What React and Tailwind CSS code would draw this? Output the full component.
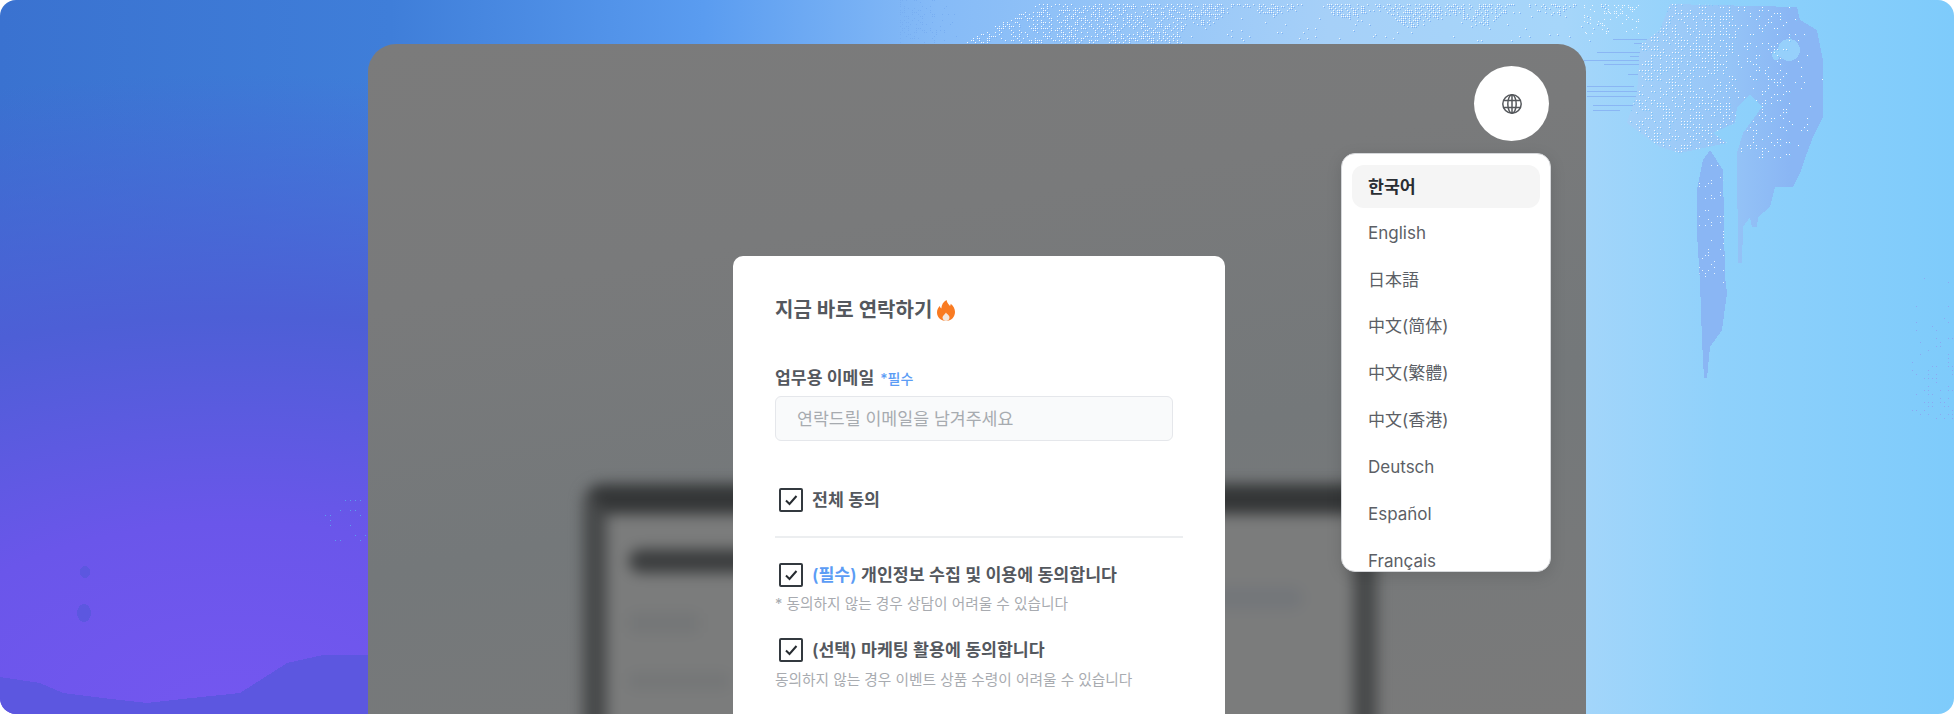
const languages = [
  "한국어",
  "English",
  "日本語",
  "中文(简体)",
  "中文(繁體)",
  "中文(香港)",
  "Deutsch",
  "Español",
  "Français",
];

const cjk = "font-['Inter','Noto_Sans_CJK_KR',sans-serif]";

// seeded so the speckle comes out the same on every render
function speckle(seed, x0, y0, x1, y1, step, density) {
  let s = seed;
  const next = () => {
    s = (s * 16807) % 2147483647;
    return s / 2147483647;
  };
  let d = "";
  for (let y = y0; y < y1; y += step) {
    for (let x = x0; x < x1; x += step) {
      if (next() < density(x, y)) d += `M${x} ${y}h1v1h-1z`;
    }
  }
  return d;
}

const blob =
  "M1670 4L1797 7L1800 20L1817 30L1823 60L1823 117L1813 137L1807 153L1800 173L1793 187L1775 187L1770 207L1758 217L1757 227L1752 227L1750 217L1743 227L1742 263L1738 263L1737 153L1743 133L1762 107L1750 95L1737 107L1735 123L1713 133L1727 143L1680 153L1660 147L1650 140L1627 123L1637 93L1640 45L1660 30Z";
const drip =
  "M1710 150L1723 170L1725 277L1727 293L1722 330L1715 340L1710 347L1707 378L1704 378L1702 340L1700 283L1697 233L1697 190L1703 160Z";
const waveLeft =
  "M0 677L40 683L63 693L103 698L147 703L173 700L240 693L287 663L323 655L368 655L368 714L0 714Z";

const topDots = speckle(7, 945, 4, 1185, 44, 2, (x, y) =>
  y > 50 - (x - 945) * 0.5 && y < 44 ? 0.36 : 0,
);
const topFade = speckle(9, 900, 0, 960, 44, 2, (x) => (960 - x) * 0.006);
const topDrips = speckle(11, 1185, 4, 1610, 42, 2, (x, y) => {
  const band = Math.sin(x * 0.09) + Math.sin(x * 0.023);
  return y < 15 + band * 7 ? 0.4 : 0.025;
});
const farLeft = speckle(17, 1584, 5, 1640, 34, 2, () => 0.14);
const mainDots = speckle(23, 1630, 4, 1830, 160, 3, (x) =>
  x < 1735 ? 0.42 : x < 1790 ? 0.22 : 0.05,
);
const dripDots = speckle(31, 1696, 150, 1728, 285, 3, () => 0.14);
const leftDots = speckle(43, 315, 500, 368, 550, 5, (x, y) =>
  x + (y - 500) * -0.4 > 318 ? 0.22 : 0,
);
const cornerDots = speckle(
  53,
  1900,
  270,
  1954,
  420,
  4,
  (x, y) => ((x - 1900) / 54) * ((y - 270) / 150) * 0.7,
);

const leftLines = [
  [1597, 1657, 52],
  [1630, 1657, 56],
  [1584, 1657, 60],
  [1604, 1657, 64],
  [1613, 1657, 39],
  [1634, 1657, 43],
  [1587, 1634, 86],
  [1587, 1637, 91],
  [1587, 1637, 96],
  [1593, 1637, 105],
  [1593, 1620, 110],
  [1628, 1650, 74],
];

function Backdrop() {
  return (
    <svg
      className="absolute inset-0"
      width="1954"
      height="714"
      viewBox="0 0 1954 714"
      shapeRendering="crispEdges"
    >
      <defs>
        <linearGradient id="blobFill" x1="1630" x2="1790" y1="0" y2="0" gradientUnits="userSpaceOnUse">
          <stop offset="0" stopColor="#a3d0f9" />
          <stop offset="0.6" stopColor="#96c5f7" />
          <stop offset="1" stopColor="#8ab6f4" />
        </linearGradient>
        <clipPath id="blobClip">
          <path d={blob} />
        </clipPath>
        <clipPath id="dripClip">
          <path d={drip} />
        </clipPath>
      </defs>
      <path d={waveLeft} fill="#5c57e0" />
      <ellipse cx="84" cy="613" rx="7" ry="9" fill="#5c57e0" />
      <ellipse cx="85" cy="572" rx="5" ry="6" fill="#5c57e0" />
      <path d={topFade} fill="#78aef2" />
      <path d={topDots} fill="#7fb2f3" transform="translate(1 1)" />
      <path d={topDots} fill="#f2f9ff" />
      <path d={topDrips} fill="#7fb2f3" transform="translate(1 1)" />
      <path d={topDrips} fill="#eef7ff" />
      <path d={farLeft} fill="#eef7ff" />
      <path d={leftDots} fill="#5a9ff0" />
      <path d={cornerDots} fill="#8aa8f2" />
      {leftLines.map(([a, b, y]) => (
        <rect key={`${a}-${y}`} x={a} y={y} width={b - a} height="1" fill="#8ab6f4" />
      ))}
      <path d={blob} fill="url(#blobFill)" />
      <path d={drip} fill="#8ab6f4" />
      <ellipse cx="1789" cy="50" rx="11" ry="11" fill="#96d0fb" />
      <ellipse cx="1776" cy="55" rx="4" ry="5" fill="#96d0fb" />
      <g clipPath="url(#blobClip)">
        <path d={mainDots} fill="#f4faff" />
        <path d={mainDots} fill="#7fc4f8" transform="translate(1 1)" />
      </g>
      <g clipPath="url(#dripClip)">
        <path d={dripDots} fill="#e6f4ff" />
      </g>
    </svg>
  );
}

function GlobeIcon() {
  return (
    <svg width="22" height="22" viewBox="0 0 22 22" fill="none" stroke="#55585c" strokeWidth="1.5">
      <circle cx="11" cy="11" r="9.2" />
      <ellipse cx="11" cy="11" rx="4.2" ry="9.2" />
      <path d="M2.6 7.6h16.8M2.6 14.4h16.8M11 2v18" />
    </svg>
  );
}

function FireIcon() {
  return (
    <svg width="18" height="21" viewBox="0 0 18 21">
      <path
        d="M9.5 0c.6 3 2.2 4.300 3.500 6 .5-.7.700-1.500.700-2.300C16.500 6 18 8.800 18 12c0 5-3.800 9-9 9s-9-4-9-8.500c0-2.800 1.300-4.800 2.800-6.500.2 1.200.7 2 1.500 2.600C4.600 4.600 6.500 1.500 9.500 0z"
        fill="#f97b22"
      />
      <path d="M9 12.500c.4 1.400 3.500 2.500 3.500 5 0 2-1.600 3.500-3.500 3.500s-3.500-1.500-3.500-3.400c0-2.300 2.600-3 3.500-5.100z" fill="#f3e7de" />
    </svg>
  );
}

function Check() {
  return (
    <span className="flex h-6 w-6 shrink-0 items-center justify-center rounded-[2px] border-2 border-[#33393f] bg-white">
      <svg width="14" height="12" viewBox="0 0 14 12" fill="none" stroke="#262b30" strokeWidth="2">
        <path d="M2 6.500l3.500 3.500 7-8" />
      </svg>
    </span>
  );
}

function ConsentRow({ children }) {
  return (
    <div className="ml-1 flex h-6 items-center gap-[9px] text-[17.3px] leading-6 font-semibold text-[#54585e]">
      <Check />
      <span>{children}</span>
    </div>
  );
}

// the blurred laptop photo behind the form
function LaptopBlur() {
  return (
    <div className="absolute top-[440px] left-[215px] h-[400px] w-[794px] rounded-[20px] border-x-[24px] border-t-[30px] border-x-[#47494a] border-t-[#343637] bg-[#7b7c7c] blur-[7px]">
      <div className="flex items-start justify-between pt-[35px] pr-[50px] pl-[22px]">
        <div className="flex flex-col gap-[40px]">
          <div className="h-6 w-[150px] rounded-full bg-[#3c3e3f]" />
          <div className="h-5 w-[70px] rounded bg-[#747677]" />
          <div className="h-4 w-[100px] rounded bg-[#747677]" />
        </div>
        <div className="mt-[38px] h-[22px] w-[90px] rounded-full bg-[#73767a]" />
      </div>
    </div>
  );
}

function LanguageMenu() {
  return (
    <div className={`h-[419px] w-[210px] overflow-hidden rounded-[14px] border border-[#d5d7da] bg-white px-[10px] pt-[11px] shadow-[0_4px_16px_rgba(0,0,0,0.12)] ${cjk}`}>
      <ul className="flex flex-col gap-[3.9px]">
        {languages.map((lang, i) => (
          <li
            key={lang}
            className={
              i === 0
                ? "flex h-[43px] shrink-0 items-center rounded-xl bg-[#f5f5f5] px-4 text-[17.3px] font-semibold text-[#2a2e33]"
                : "flex h-[43px] shrink-0 items-center rounded-xl px-4 text-[17px] text-[#5c5f66]"
            }
          >
            {lang}
          </li>
        ))}
      </ul>
    </div>
  );
}

export default function App() {
  return (
    <div className="relative h-[714px] w-[1954px] overflow-hidden rounded-2xl bg-[radial-gradient(ellipse_1150px_640px_at_12%_100%,#7457f0_0%,#6a56ea_30%,#4d5fd6_62%,rgba(72,100,215,0)_100%),linear-gradient(90deg,#3a72d0_0%,#3f7ed9_20%,#5a9cf0_36%,#86bbf7_48%,#a6d0f8_68%,#a6d6fa_80%,#8fd1fb_88%,#7ecbfb_100%)] pt-[44px]">
      <Backdrop />
      <div className="relative mx-auto h-[670px] w-[1218px] overflow-hidden rounded-t-[28px] bg-[linear-gradient(170deg,#7b7b7b_0%,#797a7b_30%,#74787a_60%,#7a7a7a_100%)] pt-[212px]">
        <LaptopBlur />

        <div className="absolute top-[22px] right-[35px] z-20 flex flex-col items-end gap-3">
          <button className="mr-0.5 flex h-[75px] w-[75px] items-center justify-center rounded-full bg-white">
            <GlobeIcon />
          </button>
          <LanguageMenu />
        </div>

        <div className={`relative z-10 ml-[365px] h-[600px] w-[492px] rounded-[10px] bg-white px-[42px] pt-10 ${cjk}`}>
          <h2 className="flex h-7 items-center gap-[5px] text-xl font-semibold text-[#54585e]">
            지금 바로 연락하기
            <FireIcon />
          </h2>

          <label className="mt-[42px] flex h-6 items-center gap-[6px] text-[17.2px] font-semibold text-[#54585e]">
            업무용 이메일
            <span className="mt-0.5 text-sm font-medium text-[#5b9cf5]">*필수</span>
          </label>
          <input
            className="mt-1.5 h-[45px] w-[398px] rounded-md border border-[#e5e7eb] bg-[#f9fafb] px-[21px] text-[17.3px] outline-none placeholder:text-[#a7abb0]"
            placeholder="연락드릴 이메일을 남겨주세요"
          />

          <div className="mt-[47px]">
            <ConsentRow>전체 동의</ConsentRow>
          </div>
          <div className="mt-6 h-0.5 w-[408px] bg-[#eceef0]" />

          <div className="mt-[25px]">
            <ConsentRow>
              <span className="text-[#5b9cf5]">(필수)</span> 개인정보 수집 및 이용에 동의합니다
            </ConsentRow>
          </div>
          <p className="mt-[7px] text-[14.7px] leading-5 text-[#a8abb0]">* 동의하지 않는 경우 상담이 어려울 수 있습니다</p>

          <div className="mt-6">
            <ConsentRow>(선택) 마케팅 활용에 동의합니다</ConsentRow>
          </div>
          <p className="mt-2 text-[14.7px] leading-5 text-[#a8abb0]">동의하지 않는 경우 이벤트 상품 수령이 어려울 수 있습니다</p>
        </div>
      </div>
    </div>
  );
}
